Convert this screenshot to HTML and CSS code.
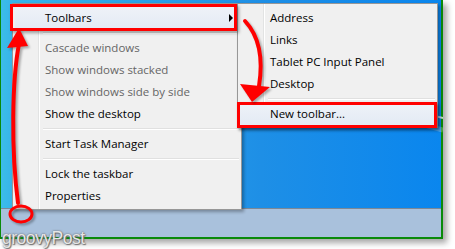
FILE: index.html
```html
<!DOCTYPE html>
<html lang="en">
<head>
    <meta charset="UTF-8">
    <title>Taskbar toolbars</title>
    <link rel="stylesheet" href="styles.css">
</head>
<body>
    <div class="shot">
        <div class="desktop">
            <svg class="swoosh" width="442" height="120" viewBox="0 0 442 120">
                <path d="M200 26 C 260 6, 360 8, 442 30" fill="none" stroke="rgba(255,255,255,0.75)" stroke-width="2"/>
                <path d="M200 32 C 270 16, 360 18, 442 42" fill="none" stroke="rgba(255,255,255,0.25)" stroke-width="5"/>
            </svg>

            <div class="menu main-menu">
                <div class="item hot">Toolbars <span class="sub-arrow"></span></div>
                <div class="sep"></div>
                <div class="item off">Cascade windows</div>
                <div class="item off">Show windows stacked</div>
                <div class="item off">Show windows side by side</div>
                <div class="item">Show the desktop</div>
                <div class="sep"></div>
                <div class="item">Start Task Manager</div>
                <div class="sep"></div>
                <div class="item">Lock the taskbar</div>
                <div class="item">Properties</div>
            </div>

            <div class="menu sub-menu">
                <div class="item">Address</div>
                <div class="item">Links</div>
                <div class="item">Tablet PC Input Panel</div>
                <div class="item">Desktop</div>
                <div class="sep"></div>
                <div class="item hot">New toolbar...</div>
            </div>
        </div>
        <div class="taskbar"></div>
    </div>

    <!-- red annotations drawn on top of the screenshot -->
    <div class="mark mark-toolbars"></div>
    <div class="mark mark-new"></div>
    <svg class="arrows" width="455" height="249" viewBox="0 0 455 249">
        <g fill="none" stroke="#f00" stroke-width="4" stroke-linecap="round">
            <path d="M19 44 C 12 80, 11 150, 18 203"/>
            <ellipse cx="21" cy="214" rx="11" ry="8" stroke-width="3"/>
            <path d="M245 21 C 258 35, 264 55, 259 86"/>
        </g>
        <g fill="#f00">
            <polygon points="19,28 7,48 28,46"/>
            <polygon points="240,84 270,87 252,102"/>
        </g>
    </svg>
    <div class="watermark">groovyPost</div>
</body>
</html>
```

FILE: styles.css
```css
body {
    margin: 0;
    background-color: #fff;
    font-family: "Open Sans", "Noto Sans", sans-serif;
    width: 455px;
    height: 249px;
    position: relative;
    overflow: hidden;
}

.shot {
    width: 440px;
    height: 237px;
    border-left: 1px solid #0a8a0a;
    border-right: 2px solid #0a8a0a;
    border-bottom: 2px solid #0a8a0a;
    display: flex;
    flex-direction: column;
    box-shadow: 4px 4px 6px rgba(0, 0, 0, 0.35);
}

.desktop {
    flex: 1;
    position: relative;
    background: linear-gradient(90deg, #3cbde9 0, #36b4ea 12px, #1e8fe6 260px, #0a86ee 100%);
}

.swoosh {
    position: absolute;
    left: 0;
    bottom: 0;
}

.taskbar {
    height: 28px;
    background-color: #a9c1dc;
    border-top: 1px solid #7d8895;
}

.menu {
    position: absolute;
    background-color: #f0f0f0;
    border: 1px solid #979797;
    padding: 3px 2px 2px 2px;
    box-shadow: 2px 2px 3px rgba(0, 0, 0, 0.3);
    background-image: linear-gradient(90deg, transparent 25px, #e2e3e3 25px, #e2e3e3 26px, #fff 26px, #fff 27px, transparent 27px);
    background-repeat: no-repeat;
}

.main-menu {
    left: 11px;
    top: 3px;
    width: 224px;
}

.sub-menu {
    left: 236px;
    top: 3px;
    width: 195px;
    z-index: 2;
}

.item {
    height: 22px;
    line-height: 22px;
    padding-left: 30px;
    font-size: 11.5px;
    color: #000;
    position: relative;
}

.item.off {
    color: #666;
}

.item.hot {
    background: linear-gradient(#eef2f8, #e3eaf4);
    border-radius: 2px;
}

.sep {
    height: 8px;
    margin-left: 28px;
    background: linear-gradient(transparent 3px, #e0e0e0 3px, #e0e0e0 4px, #fff 4px, #fff 5px, transparent 5px);
}

.sub-arrow {
    position: absolute;
    right: 6px;
    top: 7px;
    border-left: 4px solid #000;
    border-top: 4px solid transparent;
    border-bottom: 4px solid transparent;
}

.mark {
    position: absolute;
    border: 3px solid #f00;
    box-shadow: 2px 2px 3px rgba(0, 0, 0, 0.35);
    z-index: 3;
}

.mark-toolbars {
    left: 10px;
    top: 4px;
    width: 221px;
    height: 21px;
}

.mark-new {
    left: 237px;
    top: 102px;
    width: 194px;
    height: 20px;
}

.arrows {
    position: absolute;
    left: 0;
    top: 0;
    z-index: 4;
    filter: drop-shadow(2px 2px 1px rgba(0, 0, 0, 0.3));
}

.watermark {
    position: absolute;
    left: 2px;
    top: 228px;
    z-index: 5;
    font-family: "Liberation Sans", Arial, sans-serif;
    font-size: 17.5px;
    letter-spacing: -0.5px;
    color: #e6e6e6;
    text-shadow: 0 0 2px #555, 1px 1px 1px #777;
}
```
